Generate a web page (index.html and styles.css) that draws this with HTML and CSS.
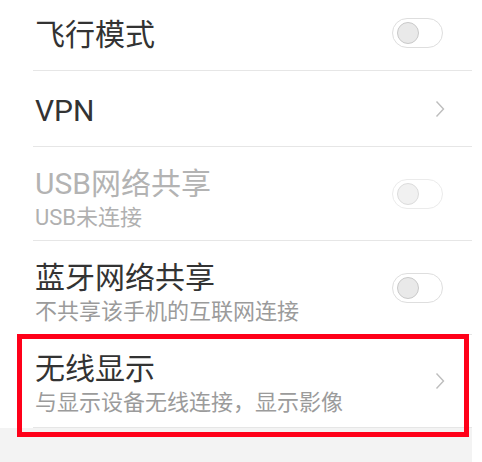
FILE: index.html
```html
<!DOCTYPE html>
<html lang="zh-CN">
<head>
  <meta charset="UTF-8" />
  <meta name="viewport" content="width=device-width, initial-scale=1.0"/>
  <title>更多连接方式</title>
  <link rel="stylesheet" href="styles.css">
</head>
<body>
  <div class="screen">
    <ul class="settings">
      <li class="item">
        <div class="text">
          <div class="title">飞行模式</div>
        </div>
        <span class="switch"><span class="knob"></span></span>
      </li>
      <li class="item">
        <div class="text">
          <div class="title">VPN</div>
        </div>
        <svg class="chevron" width="10" height="18" viewBox="0 0 10 18">
          <path d="M1.5 1.5 L8.5 9 L1.5 16.5" fill="none" stroke="#bdbdbd" stroke-width="1.4"/>
        </svg>
      </li>
      <li class="item item-sub disabled">
        <div class="text">
          <div class="title">USB网络共享</div>
          <div class="summary">USB未连接</div>
        </div>
        <span class="switch"><span class="knob"></span></span>
      </li>
      <li class="item item-sub">
        <div class="text">
          <div class="title">蓝牙网络共享</div>
          <div class="summary">不共享该手机的互联网连接</div>
        </div>
        <span class="switch"><span class="knob"></span></span>
      </li>
      <li class="item item-sub last">
        <div class="text">
          <div class="title">无线显示</div>
          <div class="summary">与显示设备无线连接，显示影像</div>
        </div>
        <svg class="chevron" width="10" height="18" viewBox="0 0 10 18">
          <path d="M1.5 1.5 L8.5 9 L1.5 16.5" fill="none" stroke="#bdbdbd" stroke-width="1.4"/>
        </svg>
        <!-- highlight marker -->
        <div class="highlight"></div>
      </li>
    </ul>
    <div class="footer"></div>
  </div>
</body>
</html>
```

FILE: styles.css
```css
body {
  margin: 0;
  background-color: #fff;
  font-family: Roboto, "Noto Sans CJK SC", sans-serif;
}

.screen {
  width: 472px;
  height: 462px;
  background-color: #fff;
  overflow: hidden;
  display: flex;
  flex-direction: column;
}

.settings {
  list-style: none;
  margin: -5px 0 0 0;
  padding: 0;
}

.item {
  position: relative;
  display: flex;
  align-items: center;
  justify-content: space-between;
  box-sizing: border-box;
  height: 76px;
  margin-left: 33px;
  padding: 0 29px 0 2px;
  border-bottom: 1px solid #e6e6e6;
}

.text {
  padding-top: 4px;
}

.item-sub {
  height: 94px;
}

.item-sub .text {
  padding-top: 11px;
}

.item.last {
  height: 93px;
}

.item.last .text {
  padding-top: 6px;
}

.title {
  font-size: 30px;
  line-height: 36px;
  color: #333;
}

.summary {
  font-size: 22px;
  line-height: 31px;
  color: #9b9b9b;
}

.disabled .title {
  color: #b3b3b3;
}

.disabled .summary {
  color: #b0b0b0;
}

.chevron {
  margin-right: -2px;
}

.switch {
  display: flex;
  align-items: center;
  box-sizing: border-box;
  width: 51px;
  height: 30px;
  padding-left: 4px;
  border: 1.5px solid #dedede;
  border-radius: 15px;
  background-color: #fff;
}

.knob {
  box-sizing: border-box;
  width: 22px;
  height: 22px;
  border-radius: 50%;
  background-color: #e9e9e9;
  border: 1px solid #c9c9c9;
}

.disabled .switch {
  border-color: #ebebeb;
}

.disabled .knob {
  background-color: #f1f1f1;
  border-color: #dcdcdc;
}

.footer {
  flex: 1;
  background-color: #f3f3f3;
}

.highlight {
  position: absolute;
  left: -16px;
  right: 3px;
  top: -1px;
  height: 103px;
  box-sizing: border-box;
  border: 5px solid #ff0019;
  pointer-events: none;
}
```
